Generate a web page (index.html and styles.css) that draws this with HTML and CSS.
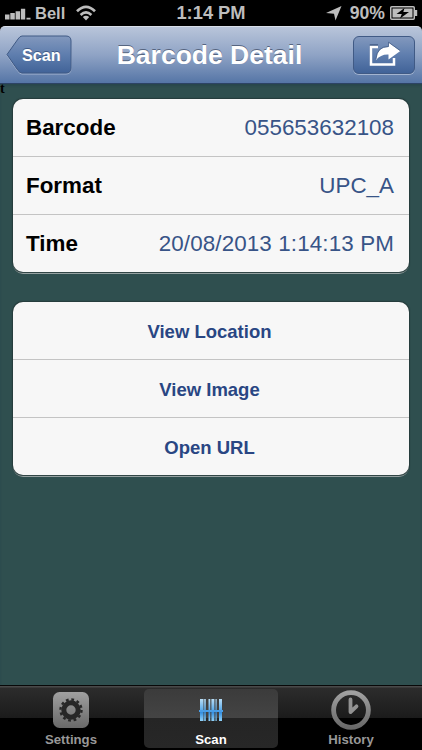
FILE: index.html
```
<!DOCTYPE html>
<html>
	<head>
		<meta charset="UTF-8">
		<title>Barcode Detail</title>
		<link rel="stylesheet" href="styles.css">
	</head>
	<body>
		<div id="wrap">
			<div class="status">
				<div class="carrier">
					<svg width="26" height="12" viewBox="0 0 26 12" fill="#bdbdbd">
						<path d="M0 6.500h4.500v5H0zM5.300 5h4.500v6.500h-4.500zM10.600 3.300h4.500v8.200h-4.500zM15.900 .8h4.300v10.700h-4.300zM21.500 9.800H25.500v1.700H21.500z"/>
					</svg>
					<span class="bell">Bell</span>
					<svg class="wifi" width="20" height="16" viewBox="0 0 20 16" fill="none" stroke="#bdbdbd" stroke-width="2.700">
						<path d="M1 6.200Q10-2.300 19 6.200M4.600 10Q10 4.900 15.400 10"/>
						<path d="M10 15.500l-3.200-3.400q3.200-2.500 6.400 0z" fill="#bdbdbd" stroke="none"/>
					</svg>
				</div>
				<span class="clock">1:14 PM</span>
				<div class="power">
					<svg width="16" height="15" viewBox="0 0 16 15" fill="#bdbdbd">
						<path d="M15.500 0L9.500 14.500L8 7.700L0 7z"/>
					</svg>
					<span class="percent">90%</span>
					<svg class="battery" width="28" height="14" viewBox="0 0 28 14">
						<rect x=".75" y=".75" width="23.500" height="12.500" rx="1" fill="none" stroke="#bdbdbd" stroke-width="1.500"/>
						<path d="M2.500 2.500h20v9h-20zM25 4h2.200v6H25z" fill="#bdbdbd"/>
						<path d="M14.500 2L6.500 8h5.300L10 12.500l9-6.500h-5.700z" fill="#000"/>
					</svg>
				</div>
			</div>
			<header>
				<a class="back">
					<svg width="66" height="40" viewBox="0 0 66 40">
						<defs>
							<linearGradient id="blue" x1="0" y1="0" x2="0" y2="1">
								<stop offset="0" stop-color="#8298bd"/>
								<stop offset=".5" stop-color="#5f7eae"/>
								<stop offset="1" stop-color="#416398"/>
							</linearGradient>
						</defs>
						<path d="M16 2.300H60Q65 2.300 65 7.300V34Q65 39 60 39H16Q14 39 12 36.500L1 20.500L12 5Q14 2.300 16 2.300z" fill="none" stroke="#a3b4d0"/>
						<path d="M16 1H60Q65 1 65 6V33Q65 38 60 38H16Q14 38 12 35.500L1 19.500L12 4Q14 1 16 1z" fill="url(#blue)" stroke="#405a85"/>
					</svg>
					<span>Scan</span>
				</a>
				<h1>Barcode Detail</h1>
				<a class="share">
					<svg width="32" height="26" viewBox="0 0 32 26">
						<path d="M9 3.500H2V20" fill="none" stroke="#405a85" stroke-width="2.500"/>
						<path d="M9 5H2V22.500H25V16" fill="none" stroke="#fff" stroke-width="2.500"/>
						<path d="M7 18Q8 5 19.500 5V.5L31.300 9L19.500 17.500V12.500Q12 12 7 18z" fill="#fff"/>
						<path d="M7 17Q8 4.500 19.500 4.500V.2L31 8.500" fill="none" stroke="#405a85" stroke-width=".8"/>
					</svg>
				</a>
			</header>
			<main>
				<span class="stray">t</span>
				<ul class="group">
					<li><b>Barcode</b><span>055653632108</span></li>
					<li><b>Format</b><span>UPC_A</span></li>
					<li><b>Time</b><span class="date">20/08/2013 1:14:13 PM</span></li>
				</ul>
				<ul class="group actions">
					<li>View Location</li>
					<li>View Image</li>
					<li>Open URL</li>
				</ul>
			</main>
			<nav>
				<a>
					<svg width="38" height="40" viewBox="0 0 38 40">
						<defs>
							<linearGradient id="gray" x1="0" y1="0" x2="0" y2="1">
								<stop offset="0" stop-color="#a0a0a0"/>
								<stop offset="1" stop-color="#696969"/>
							</linearGradient>
						</defs>
						<rect x="1" y="2" width="36" height="36" rx="6.500" fill="url(#gray)"/>
						<circle cx="19" cy="20" r="7.200" fill="none" stroke="#272727" stroke-width="5"/>
						<circle cx="19" cy="20" r="10.500" fill="none" stroke="#272727" stroke-width="2.400" stroke-dasharray="2.750 2.750"/>
					</svg>
					<span>Settings</span>
				</a>
				<a class="active">
					<svg width="24" height="40" viewBox="0 0 24 40">
						<defs>
							<linearGradient id="sky" x1="0" y1="0" x2="0" y2="1">
								<stop offset="0" stop-color="#b8ddf5"/>
								<stop offset=".5" stop-color="#5aa9e8"/>
								<stop offset=".55" stop-color="#2784db"/>
								<stop offset="1" stop-color="#91d3fa"/>
							</linearGradient>
						</defs>
						<path d="M1 9h3.500v22H1zM5.200 9h1.600v22H5.200zM9.500 9h1.800v22H9.500zM12.400 9h3v22h-3zM16.500 9h1.200v22h-1.200zM20 9h3v22h-3z" fill="url(#sky)"/>
						<path d="M0 20h24v2H0z" fill="#499de6"/>
					</svg>
					<span>Scan</span>
				</a>
				<a>
					<svg width="42" height="42" viewBox="0 0 42 42" fill="none">
						<circle cx="21" cy="21" r="17.400" stroke="url(#gray)" stroke-width="4.800"/>
						<path d="M20.500 10.500V23L26.500 17.300" stroke="#929292" stroke-width="3.800" stroke-linecap="round" stroke-linejoin="round"/>
					</svg>
					<span>History</span>
				</a>
			</nav>
		</div>
	</body>
</html>
```
FILE: styles.css
```
body {
	margin: 0;
	background: #000;
	font-family: "Liberation Sans", Arial, sans-serif;
}
ul {
	margin: 0;
	padding: 0;
	list-style: none;
}
svg {
	display: block;
	overflow: visible;
}
#wrap {
	width: 422px;
	height: 750px;
	display: flex;
	flex-direction: column;
	overflow: hidden;
}
.status {
	height: 26px;
	display: grid;
	grid-template-columns: 1fr auto 1fr;
	align-items: center;
	color: #bdbdbd;
	font-weight: bold;
	line-height: 26px;
}
.carrier, .power {
	display: flex;
	align-items: center;
}
.carrier {
	padding-left: 5px;
}
.carrier > svg:first-child {
	margin-top: 2px;
}
.bell {
	margin-left: 4px;
	font-size: 16.500px;
}
.wifi {
	margin-left: 11px;
}
.clock {
	font-size: 18.300px;
}
.power {
	justify-content: flex-end;
	padding-right: 4px;
}
.percent {
	margin-left: 8px;
	font-size: 17.600px;
}
.battery {
	margin-left: 5px;
}
header {
	height: 58px;
	box-sizing: border-box;
	padding: 0 7px 2px 6px;
	display: flex;
	align-items: center;
	justify-content: space-between;
	border-top: 1px solid #d9dfe9;
	border-bottom: 1px solid #2d4365;
	border-radius: 5px 5px 0 0;
	background: linear-gradient(#b9c5da, #8fa3c5 50%, #5575a6);
}
.back {
	display: grid;
	width: 66px;
	margin-top: 2px;
}
.back > * {
	grid-area: 1 / 1;
}
.back span {
	align-self: center;
	padding-left: 16px;
	font-size: 16.200px;
	font-weight: bold;
	color: #fff;
	text-shadow: 0 -1px 0 #405a85;
}
h1 {
	margin: 0;
	padding: 2px 6px 0 0;
	font-size: 26.500px;
	line-height: 30px;
	color: #fff;
	text-shadow: 0 -1px 0 #566580;
}
.share {
	width: 62px;
	height: 38px;
	margin-top: 1px;
	padding-left: 3px;
	box-sizing: border-box;
	display: flex;
	align-items: center;
	justify-content: center;
	border: 1px solid #405a85;
	border-radius: 6px;
	background: linear-gradient(#8298bd, #5f7eae 50%, #416398);
	box-shadow: 0 1px 0 #a3b4d0;
}
main {
	position: relative;
	flex: 1;
	padding: 15px 13px 0;
	background: #2f4f4f;
	box-shadow: inset 0 2px 2px #29474c;
}
.stray {
	position: absolute;
	left: 0;
	top: -2px;
	font: bold 14px/14px "Liberation Serif", serif;
	color: #000;
}
.group {
	border-radius: 10px;
	background: #f7f7f7;
	box-shadow: 0 0 1px 1px #263b3b, 0 2px 0 #a4aeae;
}
.group li {
	height: 58px;
	box-sizing: border-box;
	padding: 0 15px 0 13px;
	display: flex;
	align-items: center;
	justify-content: space-between;
	border-bottom: 1px solid #c4c4c4;
	font-size: 22.400px;
	color: #000;
}
.group li:last-child {
	height: 57px;
	border-bottom: 0;
}
.group span {
	color: #385487;
}
.group .date {
	letter-spacing: .12px;
}
.actions {
	margin-top: 30px;
}
.actions li {
	justify-content: center;
	padding: 2px 14px 0 11px;
	font-size: 18.500px;
	font-weight: bold;
	color: #294683;
}
nav {
	height: 65px;
	box-sizing: border-box;
	padding: 3px 4px;
	display: grid;
	grid-template-columns: 134px 134px 134px;
	column-gap: 6px;
	border-top: 1px solid #080808;
	background: linear-gradient(#494949 0, #494949 1px, #2c2c2c 2px, #1b1b1b 32px, #000 32px);
}
nav a {
	display: flex;
	flex-direction: column;
	align-items: center;
	border-radius: 5px;
	font-size: 13.200px;
	font-weight: bold;
	line-height: 16px;
	color: #989898;
}
nav svg {
	height: 42px;
}
nav span {
	margin-top: 1px;
}
nav .active {
	color: #fff;
	background: linear-gradient(#3b3b3b, #444 29px, #252525 29px, #272727);
}
```
